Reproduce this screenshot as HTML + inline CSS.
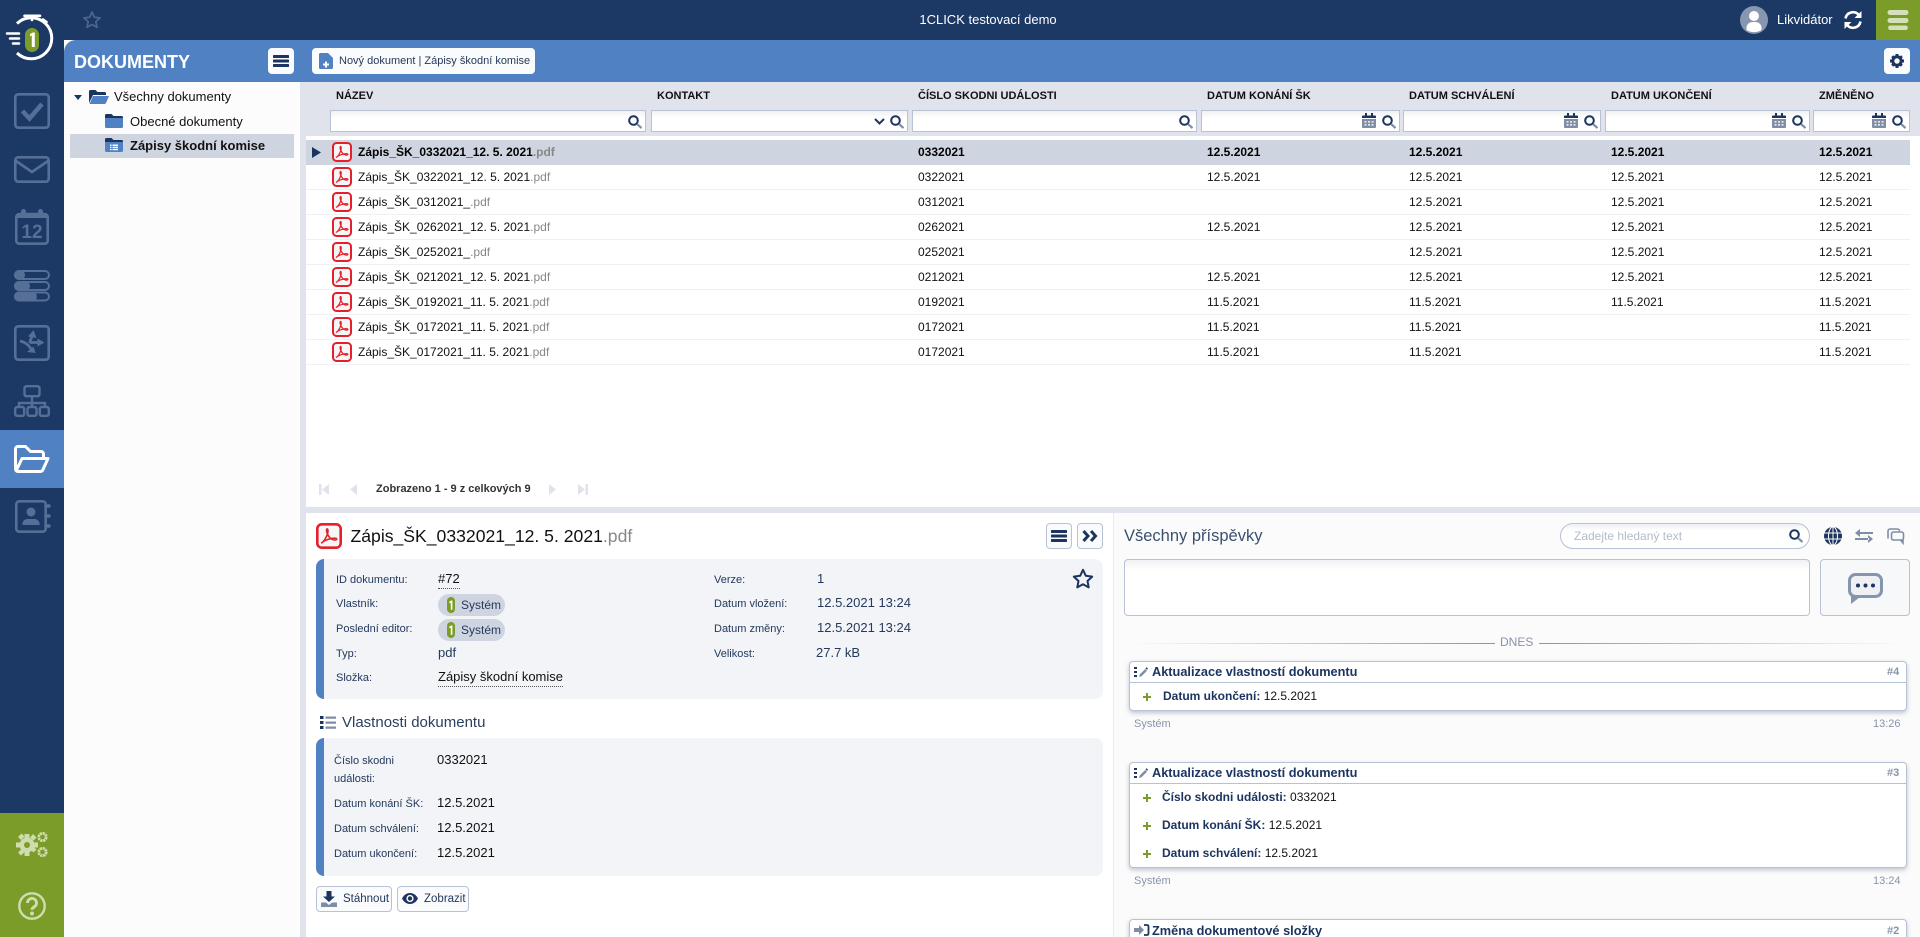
<!DOCTYPE html>
<html lang="cs"><head><meta charset="utf-8"><title>1CLICK</title>
<style>
*{box-sizing:border-box}
html,body{margin:0;padding:0;width:1920px;height:937px;overflow:hidden;background:#fff;font-family:"Liberation Sans",sans-serif;font-size:12px;color:#111}
#w{position:relative;width:1920px;height:937px;overflow:hidden}
.a{position:absolute}
.t{position:absolute;white-space:nowrap;line-height:16px;height:16px}
svg{position:absolute;display:block;overflow:visible}
.row{position:absolute;left:306px;width:1604px;height:25px;border-bottom:1px solid #eef0f3}
.row .t{top:4px}
.row.s{background:#cfd5e0;border-bottom:0;font-weight:bold;color:#000}
.ext{color:#888;font-weight:normal}
.row.s .ext{font-weight:bold}
.hd{position:absolute;top:88px;font-weight:bold;font-size:11px;line-height:16px;color:#111;white-space:nowrap}
.inp{position:absolute;top:110px;height:22px;border:1px solid #b7c2d4;background:linear-gradient(#f0f1f4,#fff 7px)}
.lb{position:absolute;white-space:nowrap;font-size:11px;line-height:16px;color:#24395c}
.v{position:absolute;white-space:nowrap;font-size:13px;line-height:16px;color:#24395c}
.v.k{color:#111}
.chip{position:absolute;left:438px;width:67px;height:22px;border-radius:11px;background:#cfd5e0;font-size:12px;line-height:22px;color:#24395c;padding-left:23px}
.panel{position:absolute;left:316px;width:787px;background:#f2f4f7;border-left:8px solid #4f81c3;border-radius:8px}
.btn{position:absolute;background:#fafbfd;border:1px solid #b7c2d4;border-radius:4px}
.card{position:absolute;background:#fff;border:1px solid #b7c2d4;border-radius:4px;box-shadow:0 2px 5px rgba(50,70,100,.3)}
.ct{position:absolute;font-weight:bold;font-size:12.75px;line-height:16px;color:#1c3560;white-space:nowrap}
.gr{position:absolute;font-size:11px;line-height:16px;color:#8795aa;white-space:nowrap}
.num{position:absolute;font-weight:bold;font-size:11px;line-height:16px;color:#8795aa;white-space:nowrap}
.ln{position:absolute;font-size:12px;font-weight:bold;line-height:16px;color:#1c3560;white-space:nowrap}
.ln b{color:#111;font-weight:normal}
.pl{position:absolute;width:8px;height:8px;background:linear-gradient(#7c9c2a,#7c9c2a) center/8px 2px no-repeat,linear-gradient(#7c9c2a,#7c9c2a) center/2px 8px no-repeat}
.tb{position:absolute;left:0;width:64px}
</style></head><body><div id="w">
<svg width="0" height="0" style="position:absolute">
<defs>
<symbol id="pdf" viewBox="0 0 20 20"><rect x="1" y="1" width="18" height="18" rx="3.5" fill="#f6f6f6" stroke="#e4202c" stroke-width="2"/><path d="M4 15.5c2-1 4-4.5 5-7.5.4-1.500.3-3.500-.4-3.500s-.7 2 0 3.500c1.200 2.800 3 4.500 5 5 1.500.3 2.500-.2 2.300-.8-.3-.7-3-.6-5.900.2-2.600.7-4.800 2-6 3.100z" fill="none" stroke="#e4202c" stroke-width="1.200"/></symbol>
<symbol id="srch" viewBox="0 0 14 14"><circle cx="5.5" cy="5.5" r="4.300" fill="none" stroke="#1c3560" stroke-width="2"/><path d="M9 9l4.500 4" stroke="#7f8da6" stroke-width="2.200"/></symbol>
<symbol id="cal" viewBox="0 0 14 15"><path d="M0 3.500a1 1 0 0 1 1-1h12a1 1 0 0 1 1 1V5H0z" fill="#1c3560"/><path d="M3 0h2v3H3zM9 0h2v3H9z" fill="#1c3560"/><path d="M0 6h14v8a1 1 0 0 1-1 1H1a1 1 0 0 1-1-1z" fill="#7f8da6"/><path d="M2.500 8h2v1.600h-2zM6 8h2v1.600H6zM9.500 8h2v1.600h-2zM2.500 11h2v1.600h-2zM6 11h2v1.600H6zM9.500 11h2v1.600h-2z" fill="#e8ebf0"/></symbol>
<symbol id="burger" viewBox="0 0 16 12"><path d="M1 0h14a1 1 0 0 1 0 3H1a1 1 0 0 1 0-3zM1 4.500h14a1 1 0 0 1 0 3H1a1 1 0 0 1 0-3zM1 9h14a1 1 0 0 1 0 3H1a1 1 0 0 1 0-3z" fill="#1c3560"/></symbol>
<symbol id="eglyph" viewBox="0 0 14 14"><path d="M0 2h3v2H0zM0 6h3v2H0zM0 10h3v2H0z" fill="#1c3560"/><path d="M5 12l.7-2.500 5.500-5.500 1.800 1.800-5.500 5.500z" fill="#7f8da6"/><path d="M11.500 3.300l1-1 1.500 1.500-1 1z" fill="#1c3560"/></symbol>
<symbol id="onebadge" viewBox="0 0 8 16"><rect x="0" y="0" width="8" height="16" rx="4" fill="#7c9c2a"/><path d="M2.300 4.800l1.900-1.300h1.200v9.300H3.800V5.700l-1.500.6z" fill="#fff"/></symbol>
</defs></svg>

<!-- top bar -->
<div class="a" style="left:0;top:0;width:1920px;height:40px;background:#1c3864"></div>
<div class="a" style="left:0;top:0;width:64px;height:937px;background:#1c3864"></div>
<div class="a" style="left:1876px;top:0;width:44px;height:40px;background:#7c9c2a"></div>
<svg style="left:1888px;top:10px" width="20" height="20"><path d="M2 0h16a2.500 2.500 0 0 1 0 5H2a2.500 2.500 0 0 1 0-5zM2 8h16a2.500 2.500 0 0 1 0 5H2a2.500 2.500 0 0 1 0-5zM2 15.500h16a2.300 2.300 0 0 1 0 4.500H2a2.300 2.300 0 0 1 0-4.500z" fill="#d5e0b8"/></svg>
<div class="t" style="left:887px;width:202px;text-align:center;top:12px;color:#fff;font-size:13px">1CLICK testovací demo</div>
<svg style="left:1740px;top:6px" width="28" height="28"><circle cx="14" cy="14" r="14" fill="#8897b0"/><circle cx="14" cy="10" r="5" fill="#fff"/><path d="M6.500 24v-3a6 6 0 0 1 6-5h3a6 6 0 0 1 6 5v3a14 14 0 0 1-15 0z" fill="#fff"/></svg>
<div class="t" style="left:1777px;top:12px;color:#fff;font-size:13px">Likvidátor</div>
<svg style="left:1843px;top:10px" width="20" height="20" viewBox="0 0 20 20"><path d="M2.500 8.500A7.600 7.600 0 0 1 15.700 4.800" fill="none" stroke="#fff" stroke-width="2.600"/><path d="M18.500 1v7h-7z" fill="#fff"/><path d="M17.500 11.500A7.600 7.600 0 0 1 4.300 15.200" fill="none" stroke="#fff" stroke-width="2.600"/><path d="M1.500 19v-7h7z" fill="#fff"/></svg>
<svg style="left:82px;top:10px" width="20" height="20" viewBox="0 0 24 24"><path d="M12 2.500l2.900 6.200 6.700.8-5 4.600 1.400 6.700L12 17.400l-6 3.400 1.400-6.700-5-4.600 6.700-.8z" fill="none" stroke="#4c648c" stroke-width="2.200" stroke-linejoin="round"/></svg>

<!-- logo -->
<svg style="left:0;top:0" width="64" height="64">
<path d="M17 23.500A20.500 20.500 0 1 1 17 53" fill="none" stroke="#fff" stroke-width="3"/>
<path d="M24.500 15.800h15.500M32 16v4M43 19.500l3.500 2.500" stroke="#fff" stroke-width="2.600" stroke-linecap="round" fill="none"/>
<path d="M7 33.500h12M10 38.500h9M13 43.500h6" stroke="#fff" stroke-width="2.500" stroke-linecap="round"/>
<rect x="25" y="28" width="14" height="24" rx="7" fill="#7c9c2a"/>
<path d="M30 34l3-1.500h1.800V47h-3V35.500l-1.800.8z" fill="#fff"/>
</svg>

<!-- sidebar icons -->
<svg style="left:14px;top:93px" width="36" height="36" viewBox="0 0 36 36" fill="none" stroke="#566f96" stroke-width="2.600"><rect x="1.300" y="1.300" width="33.400" height="33.400" rx="3"/><path d="M8.500 18l7 7.500L28 11" stroke-width="4.500"/></svg>
<svg style="left:14px;top:156px" width="36" height="27" viewBox="0 0 36 27" fill="none" stroke="#566f96" stroke-width="2.600"><rect x="1.300" y="1.300" width="33.400" height="24.400" rx="3"/><path d="M2 5l16 11L34 5"/></svg>
<svg style="left:15px;top:209px" width="34" height="36" viewBox="0 0 34 36"><rect x="1.300" y="5" width="31.400" height="29.700" rx="3" fill="none" stroke="#566f96" stroke-width="2.600"/><path d="M1 5h32v4H1z" fill="#566f96"/><rect x="6" y="0" width="5" height="7" rx="2.500" fill="#566f96"/><rect x="23" y="0" width="5" height="7" rx="2.500" fill="#566f96"/><text x="17" y="29" text-anchor="middle" font-family="Liberation Sans" font-weight="bold" font-size="19" fill="#566f96">12</text></svg>
<svg style="left:14px;top:270px" width="36" height="31" viewBox="0 0 36 31" fill="none" stroke="#566f96" stroke-width="2"><rect x="1" y="1" width="34" height="8" rx="4"/><rect x="1" y="12" width="34" height="8" rx="4"/><rect x="1" y="22.500" width="34" height="8" rx="4"/><rect x="1" y="1" width="9" height="8" rx="4" fill="#566f96"/><rect x="1" y="12" width="14" height="8" rx="4" fill="#566f96"/><rect x="1" y="22.500" width="21" height="8" rx="4" fill="#566f96"/></svg>
<svg style="left:14px;top:325px" width="36" height="36" viewBox="0 0 36 36"><rect x="1.300" y="1.300" width="33.400" height="33.400" rx="3" fill="none" stroke="#566f96" stroke-width="2.600"/><path d="M6 16c5 1 9.500 4.500 11.500 9" fill="none" stroke="#566f96" stroke-width="2.800"/><path d="M21.500 28l-8.500-1 6.500-5.500z" fill="#566f96"/><path d="M15.500 18l2.500-7" stroke="#566f96" stroke-width="2.800"/><path d="M14 11.500L19.500 5l3 8z" fill="#566f96"/><path d="M16 17.500h8" stroke="#566f96" stroke-width="2.800"/><path d="M23.500 13.500l7 4-7 4z" fill="#566f96"/></svg>
<svg style="left:14px;top:385px" width="36" height="32" viewBox="0 0 36 32" fill="none" stroke="#566f96" stroke-width="2.400"><rect x="10.500" y="1.200" width="15" height="10" rx="2"/><path d="M18 11v7M5 21v-3h26v3M18 18v3"/><rect x="1.200" y="22" width="9" height="8.800" rx="2"/><rect x="13.500" y="22" width="9" height="8.800" rx="2"/><rect x="25.800" y="22" width="9" height="8.800" rx="2"/></svg>
<div class="tb" style="top:430px;height:58px;background:#4f81c3"></div>
<svg style="left:14px;top:445px" width="36" height="28" viewBox="0 0 36 28" fill="none" stroke="#fff" stroke-width="3" stroke-linejoin="round"><path d="M7 26.500H4a2.500 2.500 0 0 1-2.500-2.500V4A2.500 2.500 0 0 1 4 1.500h7.500l5 5H27a2.500 2.500 0 0 1 2.500 2.500v3"/><path d="M2 26l6-12.500h26L29 24.500a3 3 0 0 1-2.700 2H7"/></svg>
<svg style="left:15px;top:500px" width="35" height="33" viewBox="0 0 35 33"><rect x="1.300" y="1.300" width="29.400" height="30.400" rx="3" fill="none" stroke="#566f96" stroke-width="2.600"/><circle cx="16" cy="12" r="4.500" fill="#566f96"/><path d="M7.500 25v-2a5 5 0 0 1 5-4h7a5 5 0 0 1 5 4v2z" fill="#566f96"/><path d="M31 6h3M31 16h3M31 26h3" stroke="#566f96" stroke-width="3.500" stroke-linecap="round"/></svg>
<div class="tb" style="top:813px;height:124px;background:#7c9c2a"></div>
<svg style="left:16px;top:831px" width="32" height="27" viewBox="0 0 32 27">
<g fill="#cfdcae"><circle cx="11" cy="14" r="7.500"/><path d="M8.500 3h5v4h-5zM8.500 21h5v4h-5zM0 11.500h4v5H0zM18 11.500h4v5h-4zM2 6l3.500-3.500 3 3-3.500 3.500zM14 18l3-3 3.500 3.500-3 3zM2 21.500L5.500 18l3 3L5 24.500zM14 6.500l3-3.500 3.500 3.500-3 3z"/></g><circle cx="11" cy="14" r="3" fill="#7c9c2a"/>
<circle cx="26.500" cy="6" r="3.700" fill="none" stroke="#cfdcae" stroke-width="2.800" stroke-dasharray="2.300 .6"/><circle cx="26.500" cy="21" r="3.700" fill="none" stroke="#cfdcae" stroke-width="2.800" stroke-dasharray="2.300 .6"/></svg>
<svg style="left:18px;top:892px" width="28" height="28" viewBox="0 0 28 28"><circle cx="14" cy="14" r="12.700" fill="none" stroke="#cfdcae" stroke-width="2.400"/><path d="M9.500 11a4.500 4.500 0 1 1 6.800 3.800c-1.500 1-2.300 1.700-2.300 3" fill="none" stroke="#cfdcae" stroke-width="3"/><circle cx="14" cy="21.500" r="2" fill="#cfdcae"/></svg>

<!-- blue header -->
<div class="a" style="left:64px;top:40px;width:1856px;height:42px;background:#4f81c3;border-top-left-radius:12px"></div>
<div class="t" style="left:74px;top:53px;color:#fff;font-weight:bold;font-size:18px;line-height:18px;height:18px">DOKUMENTY</div>
<div class="a" style="left:268px;top:48px;width:26px;height:26px;background:#fafbfd;border-radius:4px"></div>
<svg style="left:273px;top:55px" width="16" height="12"><use href="#burger"/></svg>
<div class="a" style="left:312px;top:48px;width:223px;height:26px;background:#fafbfd;border-radius:4px"></div>
<svg style="left:319px;top:53px" width="14" height="16" viewBox="0 0 14 16"><path d="M1.500 0H9l5 5v9.500a1.500 1.500 0 0 1-1.500 1.500h-11A1.500 1.500 0 0 1 0 14.500v-13A1.500 1.500 0 0 1 1.500 0z" fill="#4f81c3"/><path d="M6 8.500h2v2h2v2H8v2H6v-2H4v-2h2z" fill="#fff"/></svg>
<div class="t" style="left:339px;top:53px;font-size:11px;color:#24395c">Nový dokument | Zápisy škodní komise</div>
<div class="a" style="left:1884px;top:48px;width:26px;height:26px;background:#fafbfd;border-radius:4px"></div>
<svg style="left:1890px;top:54px" width="14" height="14" viewBox="0 0 14 14"><circle cx="7" cy="7" r="4.200" fill="none" stroke="#1c3560" stroke-width="3"/><path d="M5.500 0h3v2.500h-3zM5.500 11.500h3V14h-3zM0 5.500h2.500v3H0zM11.500 5.500H14v3h-2.500zM1.200 3.200l2-2 1.500 1.500-2 2zM9.300 11.300l2-2 1.500 1.500-2 2zM1.200 10.800l2 2 1.500-1.500-2-2zM9.300 2.700l2-1.500 1.500 2-2 1.500z" fill="#1c3560"/></svg>

<!-- tree -->
<div class="a" style="left:64px;top:82px;width:236px;height:855px;background:#fcfcfc"></div>
<div class="a" style="left:300px;top:82px;width:6px;height:855px;background:#e0e3ec"></div>
<div class="a" style="left:306px;top:82px;width:1614px;height:54px;background:#e0e3ec"></div>
<svg style="left:74px;top:95px" width="8" height="5"><path d="M0 0h8L4 5z" fill="#1c3560"/></svg>
<svg style="left:89px;top:90px" width="20" height="14" viewBox="0 0 20 14"><path d="M0 13V1.500A1.500 1.500 0 0 1 1.500 0h5l2 2h7A1.500 1.500 0 0 1 17 3.500V5H4z" fill="#1c3560"/><path d="M.5 14l3.500-8h16l-3 7a1.500 1.500 0 0 1-1.400 1z" fill="#4f81c3"/></svg>
<div class="t" style="left:114px;top:89px;font-size:13px;color:#111">Všechny dokumenty</div>
<svg style="left:105px;top:114px" width="18" height="14" viewBox="0 0 18 14"><path d="M0 3h18v9.500a1.500 1.500 0 0 1-1.500 1.500h-15A1.500 1.500 0 0 1 0 12.500z" fill="#4f81c3"/><path d="M0 3V1.500A1.500 1.500 0 0 1 1.500 0h5l2 2h8A1.500 1.500 0 0 1 18 3.500V4H0z" fill="#1c3560"/></svg>
<div class="t" style="left:130px;top:114px;font-size:13px;color:#111">Obecné dokumenty</div>
<div class="a" style="left:70px;top:134px;width:224px;height:24px;background:#cfd5e0"></div>
<svg style="left:105px;top:138px" width="18" height="14" viewBox="0 0 18 14"><path d="M0 3h18v9.500a1.500 1.500 0 0 1-1.500 1.500h-15A1.500 1.500 0 0 1 0 12.500z" fill="#4f81c3"/><path d="M0 3V1.500A1.500 1.500 0 0 1 1.500 0h5l2 2h8A1.500 1.500 0 0 1 18 3.500V4H0z" fill="#1c3560"/><path d="M5 6.500h1.500V8H5zM5 8.800h1.500v1.400H5zM5 11h1.500v1.300H5zM7.500 6.500H13V8H7.500zM7.500 8.800H13v1.400H7.500zM7.500 11H13v1.300H7.500z" fill="#fff"/></svg>
<div class="t" style="left:130px;top:138px;font-size:13px;font-weight:bold;color:#111">Zápisy škodní komise</div>

<!-- table header -->
<div class="hd" style="left:336px">NÁZEV</div>
<div class="hd" style="left:657px">KONTAKT</div>
<div class="hd" style="left:918px">ČÍSLO SKODNI UDÁLOSTI</div>
<div class="hd" style="left:1207px">DATUM KONÁNÍ ŠK</div>
<div class="hd" style="left:1409px">DATUM SCHVÁLENÍ</div>
<div class="hd" style="left:1611px">DATUM UKONČENÍ</div>
<div class="hd" style="left:1819px">ZMĚNĚNO</div>
<div class="inp" style="left:330px;width:316px"></div><svg style="left:628px;top:115px" width="14" height="14"><use href="#srch"/></svg>
<div class="inp" style="left:651px;width:257px"></div><svg style="left:874px;top:118px" width="11" height="7"><path d="M1 1l4.500 4.500L10 1" fill="none" stroke="#1c3560" stroke-width="2"/></svg><svg style="left:890px;top:115px" width="14" height="14"><use href="#srch"/></svg>
<div class="inp" style="left:912px;width:285px"></div><svg style="left:1179px;top:115px" width="14" height="14"><use href="#srch"/></svg>
<div class="inp" style="left:1201px;width:199px"></div><svg style="left:1362px;top:113px" width="14" height="15"><use href="#cal"/></svg><svg style="left:1382px;top:115px" width="14" height="14"><use href="#srch"/></svg>
<div class="inp" style="left:1403px;width:198px"></div><svg style="left:1564px;top:113px" width="14" height="15"><use href="#cal"/></svg><svg style="left:1584px;top:115px" width="14" height="14"><use href="#srch"/></svg>
<div class="inp" style="left:1605px;width:205px"></div><svg style="left:1772px;top:113px" width="14" height="15"><use href="#cal"/></svg><svg style="left:1792px;top:115px" width="14" height="14"><use href="#srch"/></svg>
<div class="inp" style="left:1813px;width:97px"></div><svg style="left:1872px;top:113px" width="14" height="15"><use href="#cal"/></svg><svg style="left:1892px;top:115px" width="14" height="14"><use href="#srch"/></svg>

<!-- rows -->
<div class="row s" style="top:140px"><div class="t" style="left:52px">Zápis_ŠK_0332021_12. 5. 2021<span class="ext">.pdf</span></div><div class="t" style="left:612px">0332021</div><div class="t" style="left:901px">12.5.2021</div><div class="t" style="left:1103px">12.5.2021</div><div class="t" style="left:1305px">12.5.2021</div><div class="t" style="left:1513px">12.5.2021</div></div>
<div class="row" style="top:165px"><div class="t" style="left:52px">Zápis_ŠK_0322021_12. 5. 2021<span class="ext">.pdf</span></div><div class="t" style="left:612px">0322021</div><div class="t" style="left:901px">12.5.2021</div><div class="t" style="left:1103px">12.5.2021</div><div class="t" style="left:1305px">12.5.2021</div><div class="t" style="left:1513px">12.5.2021</div></div>
<div class="row" style="top:190px"><div class="t" style="left:52px">Zápis_ŠK_0312021_<span class="ext">.pdf</span></div><div class="t" style="left:612px">0312021</div><div class="t" style="left:1103px">12.5.2021</div><div class="t" style="left:1305px">12.5.2021</div><div class="t" style="left:1513px">12.5.2021</div></div>
<div class="row" style="top:215px"><div class="t" style="left:52px">Zápis_ŠK_0262021_12. 5. 2021<span class="ext">.pdf</span></div><div class="t" style="left:612px">0262021</div><div class="t" style="left:901px">12.5.2021</div><div class="t" style="left:1103px">12.5.2021</div><div class="t" style="left:1305px">12.5.2021</div><div class="t" style="left:1513px">12.5.2021</div></div>
<div class="row" style="top:240px"><div class="t" style="left:52px">Zápis_ŠK_0252021_<span class="ext">.pdf</span></div><div class="t" style="left:612px">0252021</div><div class="t" style="left:1103px">12.5.2021</div><div class="t" style="left:1305px">12.5.2021</div><div class="t" style="left:1513px">12.5.2021</div></div>
<div class="row" style="top:265px"><div class="t" style="left:52px">Zápis_ŠK_0212021_12. 5. 2021<span class="ext">.pdf</span></div><div class="t" style="left:612px">0212021</div><div class="t" style="left:901px">12.5.2021</div><div class="t" style="left:1103px">12.5.2021</div><div class="t" style="left:1305px">12.5.2021</div><div class="t" style="left:1513px">12.5.2021</div></div>
<div class="row" style="top:290px"><div class="t" style="left:52px">Zápis_ŠK_0192021_11. 5. 2021<span class="ext">.pdf</span></div><div class="t" style="left:612px">0192021</div><div class="t" style="left:901px">11.5.2021</div><div class="t" style="left:1103px">11.5.2021</div><div class="t" style="left:1305px">11.5.2021</div><div class="t" style="left:1513px">11.5.2021</div></div>
<div class="row" style="top:315px"><div class="t" style="left:52px">Zápis_ŠK_0172021_11. 5. 2021<span class="ext">.pdf</span></div><div class="t" style="left:612px">0172021</div><div class="t" style="left:901px">11.5.2021</div><div class="t" style="left:1103px">11.5.2021</div><div class="t" style="left:1513px">11.5.2021</div></div>
<div class="row" style="top:340px"><div class="t" style="left:52px">Zápis_ŠK_0172021_11. 5. 2021<span class="ext">.pdf</span></div><div class="t" style="left:612px">0172021</div><div class="t" style="left:901px">11.5.2021</div><div class="t" style="left:1103px">11.5.2021</div><div class="t" style="left:1513px">11.5.2021</div></div>
<svg style="left:312px;top:147px" width="9" height="11"><path d="M0 0l9 5.500L0 11z" fill="#1c3560"/></svg>
<svg style="left:332px;top:142px" width="20" height="20"><use href="#pdf"/></svg>
<svg style="left:332px;top:167px" width="20" height="20"><use href="#pdf"/></svg>
<svg style="left:332px;top:192px" width="20" height="20"><use href="#pdf"/></svg>
<svg style="left:332px;top:217px" width="20" height="20"><use href="#pdf"/></svg>
<svg style="left:332px;top:242px" width="20" height="20"><use href="#pdf"/></svg>
<svg style="left:332px;top:267px" width="20" height="20"><use href="#pdf"/></svg>
<svg style="left:332px;top:292px" width="20" height="20"><use href="#pdf"/></svg>
<svg style="left:332px;top:317px" width="20" height="20"><use href="#pdf"/></svg>
<svg style="left:332px;top:342px" width="20" height="20"><use href="#pdf"/></svg>

<!-- pager -->
<svg style="left:319px;top:484px" width="10" height="11"><path d="M0 0h2.500v11H0zM10 0v11L3 5.500z" fill="#e0e3ec"/></svg>
<svg style="left:350px;top:484px" width="7" height="11"><path d="M7 0v11L0 5.500z" fill="#e0e3ec"/></svg>
<div class="t" style="left:376px;top:481px;font-weight:bold;font-size:11px;color:#333">Zobrazeno 1 - 9 z celkových 9</div>
<svg style="left:549px;top:484px" width="7" height="11"><path d="M0 0v11l7-5.500z" fill="#e0e3ec"/></svg>
<svg style="left:578px;top:484px" width="10" height="11"><path d="M10 0H7.500v11H10zM0 0v11l7-5.500z" fill="#e0e3ec"/></svg>

<!-- divider -->
<div class="a" style="left:306px;top:507px;width:1614px;height:6px;background:#e0e3ec"></div>

<!-- left detail -->
<svg style="left:316px;top:523px" width="26" height="26"><use href="#pdf"/></svg>
<div class="t" style="left:350.500px;top:526px;height:20px;line-height:20px;font-size:17.6px;color:#111">Zápis_ŠK_0332021_12. 5. 2021<span class="ext">.pdf</span></div>
<div class="btn" style="left:1046px;top:523px;width:26px;height:26px"></div>
<svg style="left:1051px;top:530px" width="16" height="12"><use href="#burger"/></svg>
<div class="btn" style="left:1077px;top:523px;width:26px;height:26px"></div>
<svg style="left:1082px;top:530px" width="16" height="12" viewBox="0 0 16 12"><path d="M1.500 1L6 6l-4.500 5M9 1l4.500 5L9 11" fill="none" stroke="#1c3560" stroke-width="3"/></svg>

<div class="panel" style="top:559px;height:140px"></div>
<div class="lb" style="left:336px;top:572px">ID dokumentu:</div>
<div class="v" style="left:438px;top:571px;height:18px;border-bottom:1px dotted #555;color:#111;padding-bottom:1px">#72</div>
<div class="lb" style="left:336px;top:596px">Vlastník:</div>
<div class="chip" style="top:594px">Systém</div><svg style="left:447px;top:597px" width="8" height="16"><use href="#onebadge"/></svg>
<div class="lb" style="left:336px;top:621px">Poslední editor:</div>
<div class="chip" style="top:619px">Systém</div><svg style="left:447px;top:622px" width="8" height="16"><use href="#onebadge"/></svg>
<div class="lb" style="left:336px;top:646px">Typ:</div>
<div class="v" style="left:438px;top:645px">pdf</div>
<div class="lb" style="left:336px;top:670px">Složka:</div>
<div class="v" style="left:438px;top:669px;height:18px;border-bottom:1px dotted #555;color:#111;padding-bottom:1px">Zápisy škodní komise</div>
<div class="lb" style="left:714px;top:572px">Verze:</div><div class="v" style="left:817px;top:571px">1</div>
<div class="lb" style="left:714px;top:596px">Datum vložení:</div><div class="v" style="left:817px;top:595px">12.5.2021 13:24</div>
<div class="lb" style="left:714px;top:621px">Datum změny:</div><div class="v" style="left:817px;top:620px">12.5.2021 13:24</div>
<div class="lb" style="left:714px;top:646px">Velikost:</div><div class="v" style="left:816px;top:645px">27.7 kB</div>
<svg style="left:1072px;top:568px" width="22" height="22" viewBox="0 0 22 22"><path d="M11 1.800l2.800 6 6.400.8-4.700 4.400 1.200 6.400-5.700-3.200-5.700 3.200L6.500 13 1.800 8.600l6.400-.8z" fill="none" stroke="#1c3560" stroke-width="2" stroke-linejoin="round"/></svg>

<svg style="left:320px;top:716px" width="16" height="14" viewBox="0 0 16 14"><path d="M0 0h3.500v3H0zM0 5h3.500v3H0zM0 10h3.500v3H0z" fill="#1c3560"/><path d="M5.500 .5H16v2.300H5.500zM5.500 5.500H16v2.300H5.500zM5.500 10.500H16v2.300H5.500z" fill="#7f8da6"/></svg>
<div class="t" style="left:342px;top:715px;font-size:15px;color:#2a4060">Vlastnosti dokumentu</div>
<div class="panel" style="top:738px;height:138px"></div>
<div class="lb" style="left:334px;top:753px">Číslo skodni</div>
<div class="lb" style="left:334px;top:771px">události:</div>
<div class="v k" style="left:437px;top:752px">0332021</div>
<div class="lb" style="left:334px;top:796px">Datum konání ŠK:</div><div class="v k" style="left:437px;top:795px">12.5.2021</div>
<div class="lb" style="left:334px;top:821px">Datum schválení:</div><div class="v k" style="left:437px;top:820px">12.5.2021</div>
<div class="lb" style="left:334px;top:846px">Datum ukončení:</div><div class="v k" style="left:437px;top:845px">12.5.2021</div>

<div class="btn" style="left:316px;top:886px;width:76px;height:26px"></div>
<svg style="left:321px;top:891px" width="16" height="16" viewBox="0 0 16 16"><path d="M5.500 0h5v5.500H14L8 11 2 5.500h3.500z" fill="#1c3560"/><path d="M0 11.500h5L8 14l3-2.500h5V16H0z" fill="#7f8da6"/></svg>
<div class="t" style="left:343px;top:891px;font-size:11.5px;color:#24395c">Stáhnout</div>
<div class="btn" style="left:397px;top:886px;width:72px;height:26px"></div>
<svg style="left:402px;top:893px" width="16" height="11" viewBox="0 0 16 11"><path d="M8 0c3.500 0 6.300 2.200 8 5.500-1.700 3.300-4.500 5.500-8 5.500S1.700 8.800 0 5.500C1.700 2.200 4.500 0 8 0z" fill="#1c3560"/><circle cx="8" cy="5.500" r="3.600" fill="#fff"/><circle cx="8" cy="5.500" r="2.200" fill="#1c3560"/></svg>
<div class="t" style="left:424px;top:891px;font-size:11.5px;color:#24395c">Zobrazit</div>

<!-- right -->
<div class="a" style="left:1113px;top:513px;width:807px;height:424px;background:#fbfbfb;border-left:1px solid #e8eaf0"></div>
<div class="t" style="left:1124px;top:526px;height:20px;line-height:20px;font-size:16.5px;color:#3a5070">Všechny příspěvky</div>
<div class="a" style="left:1560px;top:523px;width:250px;height:26px;border:1px solid #b7c2d4;border-radius:13px;background:linear-gradient(#eff0f3,#fff 7px)"></div>
<div class="t" style="left:1574px;top:528px;font-size:12px;color:#b3bccb">Zadejte hledaný text</div>
<svg style="left:1789px;top:529px" width="14" height="14"><use href="#srch"/></svg>
<svg style="left:1824px;top:527px" width="18" height="18" viewBox="0 0 18 18"><circle cx="9" cy="9" r="9" fill="#1c3560"/><path d="M0 6h18M0 12h18M9 0v18" stroke="#fbfbfb" stroke-width="1"/><ellipse cx="9" cy="9" rx="4.500" ry="9" fill="none" stroke="#fbfbfb" stroke-width="1"/></svg>
<svg style="left:1855px;top:529px" width="18" height="14" viewBox="0 0 18 14"><path d="M4 3h14v2H4zM0 4l5-4v8zM0 9h14v2H0zM18 10l-5-4v8z" fill="#7f8da6"/></svg>
<svg style="left:1886px;top:528px" width="18" height="16" viewBox="0 0 18 16" fill="none" stroke="#7f8da6" stroke-width="1.600"><rect x="5.500" y="4" width="12" height="8" rx="2" fill="#fbfbfb"/><path d="M2 10.500V3a2 2 0 0 1 2-2h7.500a2 2 0 0 1 2 2"/><path d="M14.500 12l2.500 3v-3"/></svg>
<div class="a" style="left:1124px;top:559px;width:686px;height:57px;border:1px solid #b7c2d4;border-radius:4px;background:linear-gradient(#f0f1f4,#fff 10px)"></div>
<div class="a" style="left:1820px;top:559px;width:90px;height:57px;border:1px solid #b7c2d4;border-radius:4px;background:#f7f8fa"></div>
<svg style="left:1848px;top:573px" width="35" height="32" viewBox="0 0 35 32"><rect x="1.500" y="1.500" width="32" height="22" rx="6" fill="#eef0f4" stroke="#8595ae" stroke-width="3"/><path d="M3 22v9l9-7z" fill="#8595ae"/><circle cx="10" cy="12.500" r="2" fill="#1c3560"/><circle cx="17.500" cy="12.500" r="2" fill="#1c3560"/><circle cx="25" cy="12.500" r="2" fill="#1c3560"/></svg>
<div class="a" style="left:1130px;top:643px;width:365px;height:1px;background:linear-gradient(90deg,rgba(133,149,174,0),#8595ae)"></div>
<div class="a" style="left:1539px;top:643px;width:366px;height:1px;background:linear-gradient(90deg,#8595ae,rgba(133,149,174,0))"></div>
<div class="t" style="left:1500px;top:634px;font-size:12px;color:#8795aa">DNES</div>

<div class="card" style="left:1129px;top:661px;width:778px;height:50px"><div class="a" style="left:0;top:20px;width:776px;height:1px;background:#b7c2d4"></div></div>
<svg style="left:1134px;top:665px" width="14" height="14"><use href="#eglyph"/></svg>
<div class="ct" style="left:1152px;top:664px">Aktualizace vlastností dokumentu</div>
<div class="num" style="left:1887px;top:664px">#4</div>
<div class="pl" style="left:1143px;top:693px"></div>
<div class="ln" style="left:1163px;top:688px">Datum ukončení: <b>12.5.2021</b></div>
<div class="gr" style="left:1134px;top:716px">Systém</div>
<div class="gr" style="left:1873px;top:716px">13:26</div>

<div class="card" style="left:1129px;top:762px;width:778px;height:106px"><div class="a" style="left:0;top:20px;width:776px;height:1px;background:#b7c2d4"></div></div>
<svg style="left:1134px;top:766px" width="14" height="14"><use href="#eglyph"/></svg>
<div class="ct" style="left:1152px;top:765px">Aktualizace vlastností dokumentu</div>
<div class="num" style="left:1887px;top:765px">#3</div>
<div class="pl" style="left:1143px;top:794px"></div>
<div class="ln" style="left:1162px;top:789px">Číslo skodni události: <b>0332021</b></div>
<div class="pl" style="left:1143px;top:822px"></div>
<div class="ln" style="left:1162px;top:817px">Datum konání ŠK: <b>12.5.2021</b></div>
<div class="pl" style="left:1143px;top:850px"></div>
<div class="ln" style="left:1162px;top:845px">Datum schválení: <b>12.5.2021</b></div>
<div class="gr" style="left:1134px;top:873px">Systém</div>
<div class="gr" style="left:1873px;top:873px">13:24</div>

<div class="card" style="left:1129px;top:919px;width:778px;height:40px"></div>
<svg style="left:1134px;top:924px" width="15" height="13" viewBox="0 0 15 13"><path d="M0 4h5V1l5 5-5 5V8H0z" fill="#7f8da6"/><path d="M10 1h3a1.500 1.500 0 0 1 1.500 1.500v7A1.500 1.500 0 0 1 13 11h-3" fill="none" stroke="#1c3560" stroke-width="1.800"/></svg>
<div class="ct" style="left:1152px;top:923px">Změna dokumentové složky</div>
<div class="num" style="left:1887px;top:923px">#2</div>
</div></body></html>
